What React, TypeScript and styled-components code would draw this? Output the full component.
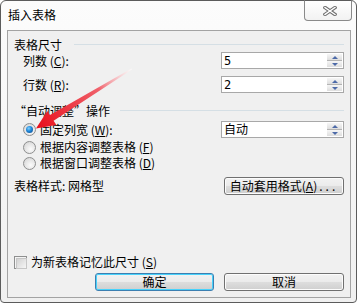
import React from 'react';
import styled, { createGlobalStyle } from 'styled-components';

const GlobalStyle = createGlobalStyle`
  html, body {
    margin: 0;
    padding: 0;
    background: #fff;
  }
  body {
    font-family: "Noto Sans CJK SC", "Liberation Sans", sans-serif;
    font-size: 12px;
    color: #000;
  }
  * {
    box-sizing: border-box;
  }
`;

const Window = styled.div`
  position: relative;
  width: 357px;
  height: 303px;
  border: 1px solid #5c5c5c;
  border-radius: 6px 6px 4px 4px;
  background: linear-gradient(#fcfcfc, #f0f0f0);
  display: flex;
  flex-direction: column;
`;

const TitleBar = styled.div`
  height: 29px;
  display: flex;
  align-items: flex-start;
  justify-content: space-between;
  padding-left: 7px;
`;

const TitleText = styled.span`
  margin-top: 6px;
  line-height: 16px;
`;

const CloseButton = styled.div`
  width: 48px;
  height: 21px;
  margin-top: -1px;
  margin-right: 4px;
  border: 1px solid #8a8a8a;
  border-top-color: #5c5c5c;
  border-radius: 0 0 4px 4px;
  background: linear-gradient(#ffffff, #f2f2f2);
  display: flex;
  align-items: center;
  justify-content: center;
  padding-left: 3px;
`;

const Client = styled.div`
  flex: 1;
  margin: 0 5px 4px 6px;
  border: 1px solid #a3a3a3;
  background: #f0f0f0;
  display: flex;
  flex-direction: column;
  padding: 5px 6px 6px 0;
`;

const GroupHeader = styled.div<{ $lineGap: number; $mt: number }>`
  height: 16px;
  display: flex;
  align-items: center;
  padding-left: 6px;
  margin-top: ${(p) => p.$mt}px;
  white-space: nowrap;
  &::after {
    content: '';
    flex: 1;
    height: 1px;
    margin-left: ${(p) => p.$lineGap}px;
    background: #d5dfe5;
  }
`;

const Quote = styled.span`
  display: inline-block;
  width: 12px;
  text-align: center;
`;

const Row = styled.div<{ $h: number; $mt: number; $pl: number }>`
  height: ${(p) => p.$h}px;
  margin-top: ${(p) => p.$mt}px;
  padding-left: ${(p) => p.$pl}px;
  display: flex;
  align-items: center;
  justify-content: space-between;
  white-space: nowrap;
`;

const Label = styled.span`
  display: flex;
  align-items: center;
  gap: 4px;
  line-height: 16px;
`;

const SpinBox = styled.div`
  width: 123px;
  height: 17px;
  border: 1px solid #a8a8a8;
  background: #fff;
  display: flex;
  align-items: center;
  justify-content: space-between;
  padding: 1px 1px 1px 2px;
`;

const SpinValue = styled.span`
  line-height: 14px;
  font-family: "DejaVu Sans Mono", "Noto Sans CJK SC", monospace;
  font-size: 12px;
`;

const SpinButtons = styled.div`
  width: 15px;
  height: 13px;
  display: flex;
  flex-direction: column;
  background: #b4b4b4;
  gap: 1px;
`;

const SpinHalf = styled.div<{ $down?: boolean }>`
  flex: 1;
  background: linear-gradient(#f6f6f6, #dedede);
  display: flex;
  align-items: center;
  justify-content: center;
  &::before {
    content: '';
    width: 0;
    height: 0;
    border-left: 3px solid transparent;
    border-right: 3px solid transparent;
    ${(p) => (p.$down ? 'border-top: 3px solid #4d6aa8;' : 'border-bottom: 3px solid #4d6aa8;')}
  }
`;

const Radio = styled.span<{ $checked?: boolean }>`
  width: 13px;
  height: 13px;
  border-radius: 50%;
  border: 1px solid #8e8f8f;
  background: radial-gradient(circle at 60% 65%, #fbfbfb 0%, #e4e4e4 55%, #cfcfcf 100%);
  display: flex;
  align-items: center;
  justify-content: center;
  flex-shrink: 0;
  &::before {
    content: '';
    width: 7px;
    height: 7px;
    border-radius: 50%;
    display: ${(p) => (p.$checked ? 'block' : 'none')};
    background: radial-gradient(circle at 40% 35%, #7fd0ff 0%, #1d86d8 45%, #0b3f80 100%);
  }
`;

const CheckBox = styled.span`
  width: 13px;
  height: 13px;
  border: 1px solid #8e8f8f;
  background: #f4f4f4;
  padding: 1px;
  flex-shrink: 0;
  &::before {
    content: '';
    display: block;
    width: 100%;
    height: 100%;
    border: 1px solid #c6c6c6;
    background: linear-gradient(135deg, #d2d2d2, #f6f6f6);
  }
`;

const Button = styled.div<{ $focused?: boolean }>`
  width: ${(p) => (p.$focused ? 119 : 120)}px;
  height: 18px;
  border: 1px solid ${(p) => (p.$focused ? '#3c7fb1' : '#707070')};
  border-radius: 3px;
  background: linear-gradient(#f2f2f2 0%, #ebebeb 48%, #dddddd 52%, #cfcfcf 100%);
  box-shadow: inset 0 0 0 1px ${(p) => (p.$focused ? '#48d2fb' : '#fcfcfc')};
  display: flex;
  align-items: center;
  justify-content: center;
  line-height: 14px;
`;

const Dots = styled.span`
  letter-spacing: 3px;
  margin-left: 2px;
`;

const Spacer = styled.div`
  flex: 1;
`;

const ButtonRow = styled.div`
  margin-top: 3px;
  display: flex;
  justify-content: flex-end;
  gap: 10px;
`;

const ArrowLayer = styled.svg`
  position: absolute;
  left: 0;
  top: 0;
  pointer-events: none;
`;

const Spin = ({ value }: { value: string }) => (
  <SpinBox>
    <SpinValue>{value}</SpinValue>
    <SpinButtons>
      <SpinHalf />
      <SpinHalf $down />
    </SpinButtons>
  </SpinBox>
);

const App = () => {
  return (
    <>
      <GlobalStyle />
      <Window>
        <TitleBar>
          <TitleText>插入表格</TitleText>
          <CloseButton>
            <svg width="14" height="10" viewBox="0 0 14 10">
              <path d="M2 1.5 L12 8.5 M12 1.5 L2 8.5" stroke="#6f6f6f" strokeWidth="3.4" strokeLinecap="square" />
              <path d="M2 1.5 L12 8.5 M12 1.5 L2 8.5" stroke="#ffffff" strokeWidth="1.4" strokeLinecap="square" />
            </svg>
          </CloseButton>
        </TitleBar>
        <Client>
          <GroupHeader $lineGap={12} $mt={0}>
            表格尺寸
          </GroupHeader>
          <Row $h={17} $mt={0} $pl={15}>
            <Label>
              <span>
                列数 (<u>C</u>):
              </span>
            </Label>
            <Spin value="5" />
          </Row>
          <Row $h={17} $mt={7} $pl={15}>
            <Label>
              <span>
                行数 (<u>R</u>):
              </span>
            </Label>
            <Spin value="2" />
          </Row>
          <GroupHeader $lineGap={10} $mt={9}>
            <span>
              <Quote>“</Quote>自动调整<Quote>”</Quote>操作
            </span>
          </GroupHeader>
          <Row $h={17} $mt={3} $pl={15}>
            <Label>
              <Radio $checked />
              <span>
                固定列宽 (<u>W</u>):
              </span>
            </Label>
            <Spin value="自动" />
          </Row>
          <Row $h={16} $mt={1} $pl={15}>
            <Label>
              <Radio />
              <span>
                根据内容调整表格 (<u>F</u>)
              </span>
            </Label>
          </Row>
          <Row $h={16} $mt={0} $pl={15}>
            <Label>
              <Radio />
              <span>
                根据窗口调整表格 (<u>D</u>)
              </span>
            </Label>
          </Row>
          <Row $h={18} $mt={6} $pl={6}>
            <Label>表格样式: 网格型</Label>
            <Button>
              自动套用格式(<u>A</u>)<Dots>...</Dots>
            </Button>
          </Row>
          <Spacer />
          <Row $h={16} $mt={0} $pl={6}>
            <Label>
              <CheckBox />
              <span>
                为新表格记忆此尺寸 (<u>S</u>)
              </span>
            </Label>
          </Row>
          <ButtonRow>
            <Button $focused>确定</Button>
            <Button>取消</Button>
          </ButtonRow>
        </Client>
        <ArrowLayer width="357" height="303" viewBox="0 0 357 303">
          <defs>
            <linearGradient id="arrowFade" x1="131" y1="68" x2="36" y2="126" gradientUnits="userSpaceOnUse">
              <stop offset="0" stopColor="#ffffff" stopOpacity="0.6" />
              <stop offset="0.35" stopColor="#f0606a" />
              <stop offset="1" stopColor="#e8101c" />
            </linearGradient>
          </defs>
          <polygon
            points="131,68.6 52.6,119.8 55.4,124 35,127.5 46.3,110 49,114 130.4,67.4"
            fill="url(#arrowFade)"
          />
        </ArrowLayer>
      </Window>
    </>
  );
};

export default App;
